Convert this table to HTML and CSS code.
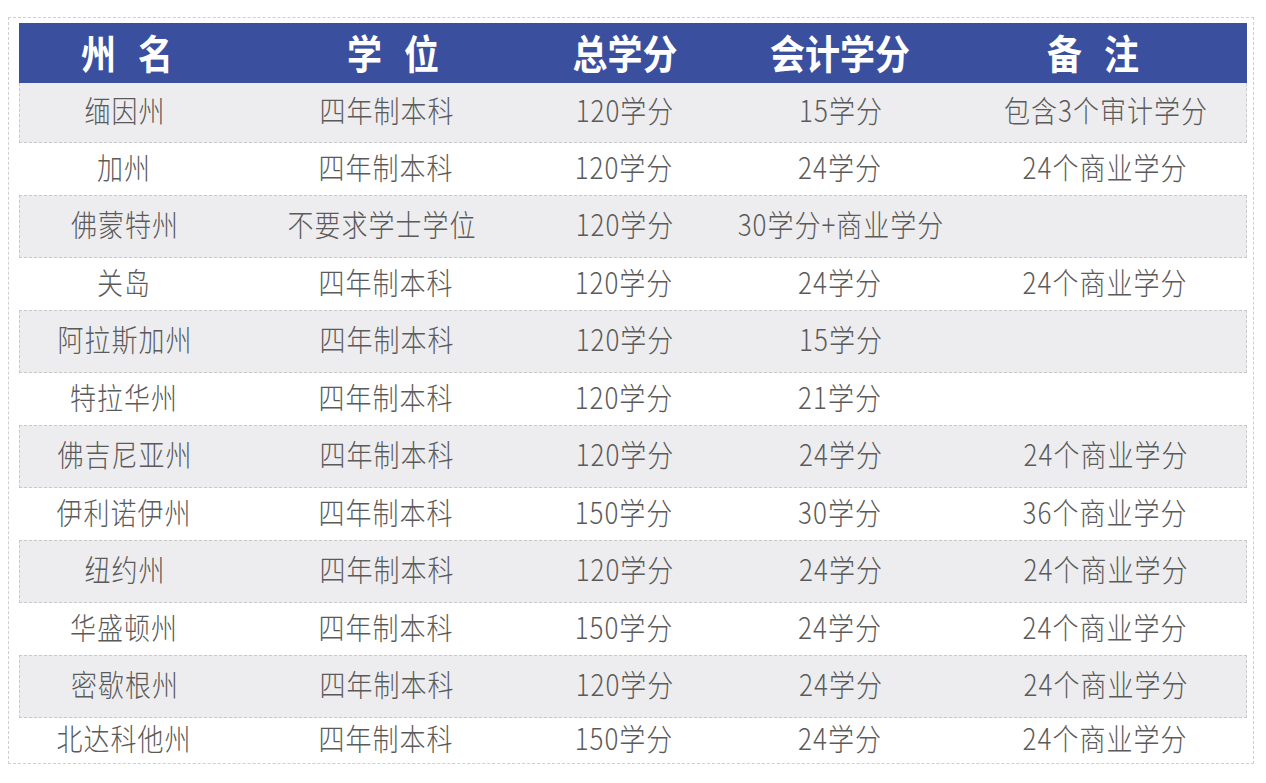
FILE: index.html
```html
<!DOCTYPE html>
<html lang="zh-CN">
<head>
<meta charset="utf-8">
<title>各州学分要求</title>
<link rel="stylesheet" href="styles.css">
</head>
<body>
<div class="frame">
  <div class="head">
    <div class="hc"><span class="t">州 名</span></div>
    <div class="hc"><span class="t">学 位</span></div>
    <div class="hc"><span class="t">总学分</span></div>
    <div class="hc"><span class="t">会计学分</span></div>
    <div class="hc"><span class="t">备 注</span></div>
    <div class="hc"></div>
  </div>
  <div class="row alt first"><div class="c"><span class="t">缅因州</span></div><div class="c"><span class="t">四年制本科</span></div><div class="c"><span class="t">120学分</span></div><div class="c"><span class="t">15学分</span></div><div class="c"><span class="t">包含3个审计学分</span></div><div class="c"></div></div>
  <div class="row"><div class="c"><span class="t">加州</span></div><div class="c"><span class="t">四年制本科</span></div><div class="c"><span class="t">120学分</span></div><div class="c"><span class="t">24学分</span></div><div class="c"><span class="t">24个商业学分</span></div><div class="c"></div></div>
  <div class="row alt"><div class="c"><span class="t">佛蒙特州</span></div><div class="c wide"><span class="t">不要求学士学位</span></div><div class="c"><span class="t">120学分</span></div><div class="c"><span class="t">30学分+商业学分</span></div><div class="c"></div><div class="c"></div></div>
  <div class="row"><div class="c"><span class="t">关岛</span></div><div class="c"><span class="t">四年制本科</span></div><div class="c"><span class="t">120学分</span></div><div class="c"><span class="t">24学分</span></div><div class="c"><span class="t">24个商业学分</span></div><div class="c"></div></div>
  <div class="row alt"><div class="c"><span class="t">阿拉斯加州</span></div><div class="c"><span class="t">四年制本科</span></div><div class="c"><span class="t">120学分</span></div><div class="c"><span class="t">15学分</span></div><div class="c"></div><div class="c"></div></div>
  <div class="row"><div class="c"><span class="t">特拉华州</span></div><div class="c"><span class="t">四年制本科</span></div><div class="c"><span class="t">120学分</span></div><div class="c"><span class="t">21学分</span></div><div class="c"></div><div class="c"></div></div>
  <div class="row alt"><div class="c"><span class="t">佛吉尼亚州</span></div><div class="c"><span class="t">四年制本科</span></div><div class="c"><span class="t">120学分</span></div><div class="c"><span class="t">24学分</span></div><div class="c"><span class="t">24个商业学分</span></div><div class="c"></div></div>
  <div class="row"><div class="c"><span class="t">伊利诺伊州</span></div><div class="c"><span class="t">四年制本科</span></div><div class="c"><span class="t">150学分</span></div><div class="c"><span class="t">30学分</span></div><div class="c"><span class="t">36个商业学分</span></div><div class="c"></div></div>
  <div class="row alt"><div class="c"><span class="t">纽约州</span></div><div class="c"><span class="t">四年制本科</span></div><div class="c"><span class="t">120学分</span></div><div class="c"><span class="t">24学分</span></div><div class="c"><span class="t">24个商业学分</span></div><div class="c"></div></div>
  <div class="row"><div class="c"><span class="t">华盛顿州</span></div><div class="c"><span class="t">四年制本科</span></div><div class="c"><span class="t">150学分</span></div><div class="c"><span class="t">24学分</span></div><div class="c"><span class="t">24个商业学分</span></div><div class="c"></div></div>
  <div class="row alt"><div class="c"><span class="t">密歇根州</span></div><div class="c"><span class="t">四年制本科</span></div><div class="c"><span class="t">120学分</span></div><div class="c"><span class="t">24学分</span></div><div class="c"><span class="t">24个商业学分</span></div><div class="c"></div></div>
  <div class="row last"><div class="c"><span class="t">北达科他州</span></div><div class="c"><span class="t">四年制本科</span></div><div class="c"><span class="t">150学分</span></div><div class="c"><span class="t">24学分</span></div><div class="c"><span class="t">24个商业学分</span></div><div class="c"></div></div>
</div>
</body>
</html>
```

FILE: styles.css
```css
* { box-sizing: border-box; }
html, body { margin: 0; padding: 0; background: #ffffff; }
body {
  font-family: "Noto Sans CJK SC", "Noto Sans", sans-serif;
}
.frame {
  margin: 17px 0 0 8px;
  width: 1246px;
  height: 747px;
  border: 1px dashed #cfcfcf;
  padding: 5px 6px 0 10px;
  overflow: hidden;
}
.head {
  display: grid;
  grid-template-columns: 216px 316px 148px 282px 224px 1fr;
  height: 60px;
  background: #3b4f9f;
  color: #ffffff;
}
.hc {
  display: flex;
  align-items: center;
  justify-content: center;
  padding-bottom: 3px;
  font-size: 35px;
  font-weight: 700;
  word-spacing: 14px;
  line-height: 1;
}
.row {
  display: grid;
  grid-template-columns: 210px 314px 162px 270px 260px 1fr;
  height: 52px;
  color: #5a5a5a;
}
.row.alt {
  height: 63px;
  background: #ededef;
  border: 1px dashed #c9c9c9;
}
.row.first {
  height: 60px;
  border-top: none;
}
.row.last { height: 45px; }
.c {
  display: flex;
  align-items: center;
  justify-content: center;
  padding-bottom: 7px;
  font-size: 26px;
  font-weight: 300;
  letter-spacing: 1px;
  line-height: 1;
  white-space: nowrap;
}
.c.wide { padding-right: 10px; }
.t {
  display: inline-block;
  transform: scaleY(1.15);
}
```
